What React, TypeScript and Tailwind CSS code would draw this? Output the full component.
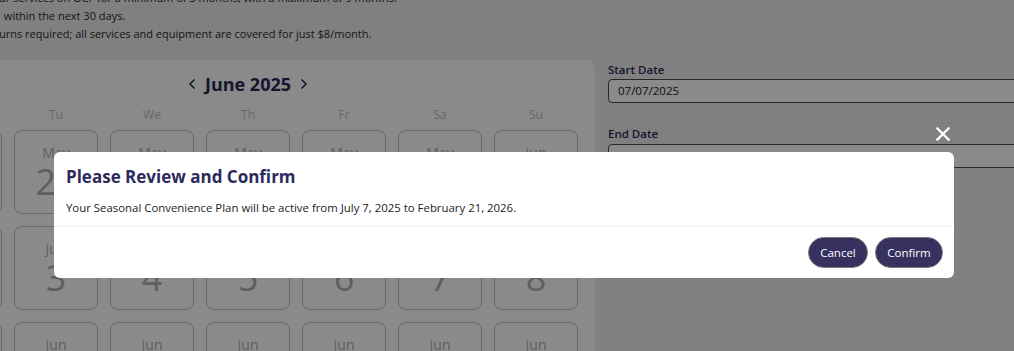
import { ChevronLeft, ChevronRight } from 'lucide-react';

const weekdays = ['Mo', 'Tu', 'We', 'Th', 'Fr', 'Sa', 'Su'];

const days = [
  ['May', 26], ['May', 27], ['May', 28], ['May', 29], ['May', 30], ['May', 31], ['Jun', 1],
  ['Jun', 2], ['Jun', 3], ['Jun', 4], ['Jun', 5], ['Jun', 6], ['Jun', 7], ['Jun', 8],
  ['Jun', 9], ['Jun', 10], ['Jun', 11], ['Jun', 12], ['Jun', 13], ['Jun', 14], ['Jun', 15],
] as const;

// plan rules; the first part of each line runs off the left edge
const rules = [
  { lead: 'Pause yo', rest: 'ur services on OCF for a minimum of 3 months, with a maximum of 9 months.', w: 'w-[136px]', gap: '' },
  { lead: 'Must start', rest: 'within the next 30 days.', w: 'w-[136px]', gap: ' ' },
  { lead: 'No ret', rest: 'urns required; all services and equipment are covered for just $8/month.', w: 'w-[136px]', gap: '' },
];

export default function App() {
  return (
    <div className="relative h-[351px] w-[1014px] overflow-hidden bg-[#ededed] font-['Open_Sans',sans-serif]">
      {/* page behind the dialog */}
      <div className="-ml-[99px] -mt-[11px]">
        <ul className="-ml-[38px] text-[11px] leading-[18px] text-[#2a2a2a]">
          {rules.map((r) => (
            <li key={r.lead} className="whitespace-nowrap">
              <span className={`inline-block text-right ${r.w}`}>{r.lead}</span>
              {r.gap && <span className="ml-[2px]">{r.gap}</span>}
              {r.rest}
            </li>
          ))}
        </ul>

        <div className="mt-[17px] flex gap-[13px]">
          <div className="w-[694px] shrink-0 rounded-tr-lg bg-white px-[17px] pt-[14px]">
            <div className="flex items-center justify-center gap-[5px] text-[#2b2856]">
              <ChevronLeft className="h-4 w-4" strokeWidth={2.5} />
              <span className="text-[18px] font-bold leading-5">June 2025</span>
              <ChevronRight className="h-4 w-4" strokeWidth={2.5} />
            </div>
            <div className="mt-[13px] grid grid-cols-7 gap-x-[12px] text-center text-[12px] leading-4 text-[#c2c2c2]">
              {weekdays.map((d) => (
                <div key={d}>{d}</div>
              ))}
            </div>
            <div className="mt-[7px] grid grid-cols-7 gap-[12px]">
              {days.map(([m, n]) => (
                <div
                  key={`${m}${n}`}
                  className="flex h-[84px] flex-col items-center rounded-lg border border-[#c4c4c4] pt-[12px] text-[#b0b0b0]"
                >
                  <span className="text-[14px] leading-5">{m}</span>
                  <span className="mt-[1px] text-[36px] leading-none">{n}</span>
                </div>
              ))}
            </div>
          </div>

          <div className="flex-1 pt-[3px]">
            <label className="block text-[11.5px] font-semibold leading-[14px] text-[#2b2856]">Start Date</label>
            <div className="mt-[2px] h-[24px] w-[500px] rounded-sm border border-[#4a4a4a] bg-white px-[9px] text-[11.5px] leading-[22px] text-[#222]">
              07/07/2025
            </div>
            <label className="mt-[24px] block text-[11.5px] font-semibold leading-[14px] text-[#2b2856]">End Date</label>
            <div className="mt-[3px] h-[24px] w-[500px] rounded-sm border border-[#4a4a4a] bg-white" />
          </div>
        </div>
      </div>

      {/* overlay */}
      <div className="absolute inset-0 bg-black/[0.46]" />

      {/* dialog */}
      <div className="absolute left-[54px] top-[152px] w-[900px] rounded-md bg-white">
        <button className="absolute -top-[25px] right-[4px] text-white">
          <svg width="14" height="14" viewBox="0 0 14 14" fill="none" stroke="currentColor" strokeWidth="2.4" strokeLinecap="square">
            <path d="M1.5 1.5 L12.5 12.5 M12.5 1.5 L1.5 12.5" />
          </svg>
        </button>
        <div className="border-b border-[#f1f1f1] px-[12px] pb-[9px] pt-[11px]">
          <h2 className="text-[17px] font-bold leading-7 text-[#2d2a5e]">Please Review and Confirm</h2>
          <p className="mt-[8px] text-[11.4px] leading-[18px] text-[#222]">
            Your Seasonal Convenience Plan will be active from July 7, 2025 to February 21, 2026.
          </p>
        </div>
        <div className="flex justify-end gap-[7px] px-[11px] pb-[10px] pt-[10px]">
          <button className="h-[31px] w-[60px] rounded-full border-[1.5px] border-[#7a7a7a] bg-[#36315f] text-[11.5px] text-white">
            Cancel
          </button>
          <button className="h-[31px] w-[68px] rounded-full border-[1.5px] border-[#7a7a7a] bg-[#36315f] text-[11.5px] text-white">
            Confirm
          </button>
        </div>
      </div>
    </div>
  );
}
